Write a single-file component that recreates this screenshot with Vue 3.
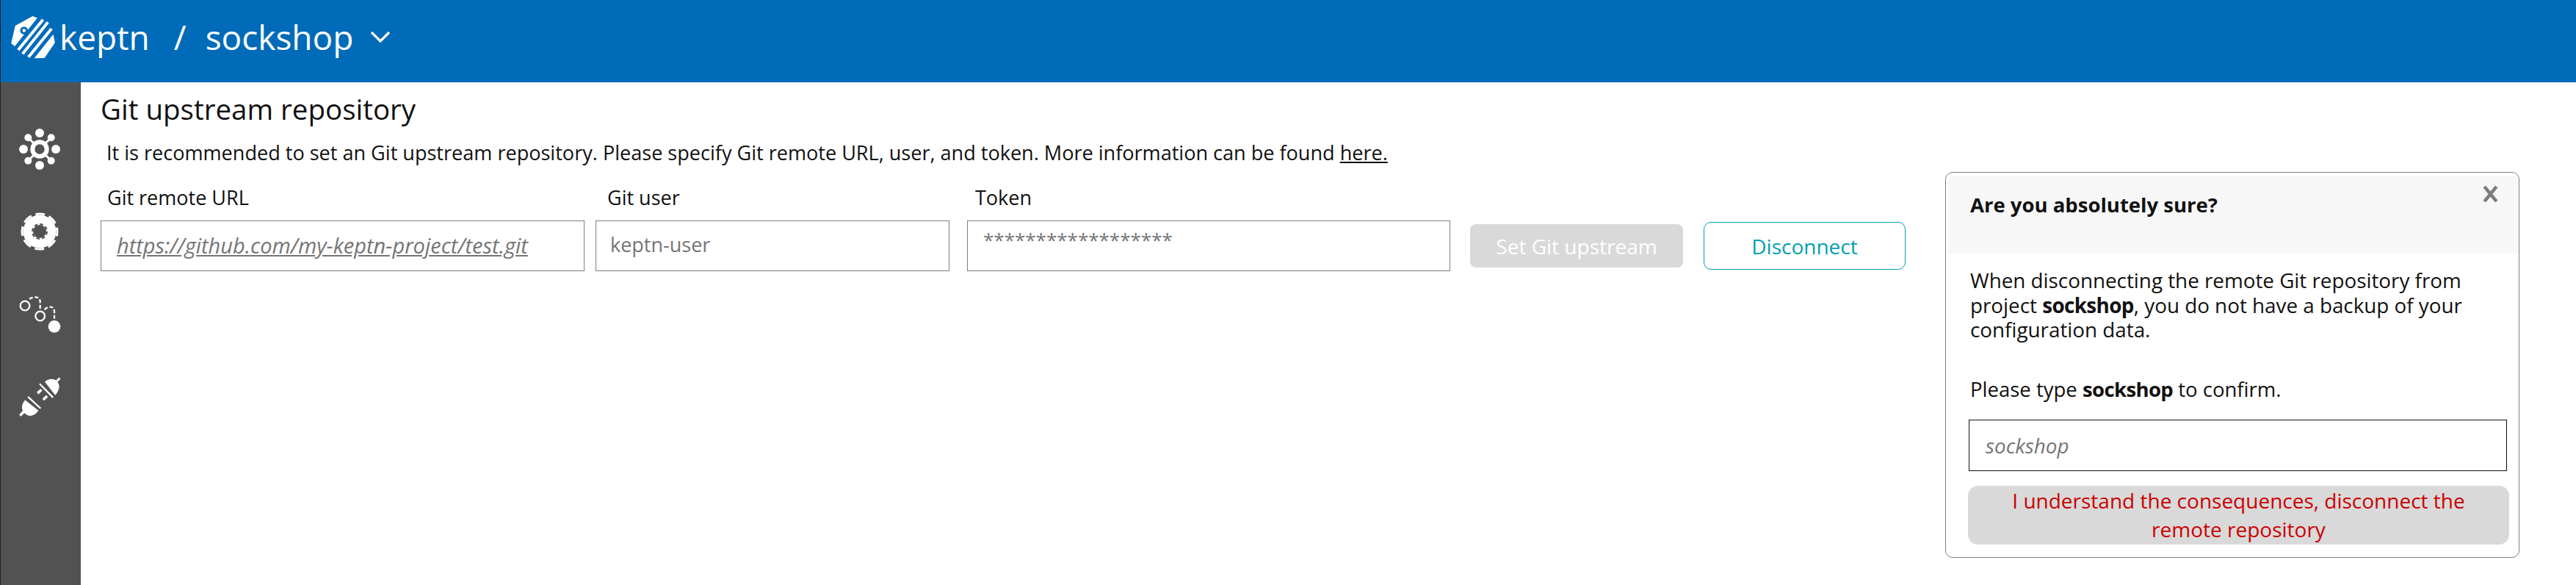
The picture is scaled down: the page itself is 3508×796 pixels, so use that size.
<script setup>
const fields = [
  { label: 'Git remote URL', value: 'https://github.com/my-keptn-project/test.git', cls: 'url' },
  { label: 'Git user', value: 'keptn-user', cls: 'user' },
  { label: 'Token', value: '******************', cls: 'token' }
]
</script>

<template>
  <div class="page">
    <header class="top">
      <svg class="logo" viewBox="45 30 180 178" width="60" height="59">
        <path fill="#fff" d="M62 72 L133 33 L153 40 L60 157 L45 145 Z" />
        <circle cx="98" cy="92" r="16" fill="#006bb8" />
        <circle cx="98" cy="92" r="7" fill="#fff" />
        <path stroke="#fff" stroke-width="12" fill="none" d="M176 47 L74 172 M196 58 L92 188 M211 84 L116 201" />
        <path fill="#fff" d="M218 108 L225 142 L182 205 L140 206 Z" />
      </svg>
      <span class="brand">keptn</span>
      <span class="slash">/</span>
      <span class="project">sockshop</span>
      <svg class="chev" viewBox="0 0 28 16" width="28" height="16"><path d="M2 2 L14 14 L26 2" fill="none" stroke="#fff" stroke-width="3.2" /></svg>
    </header>
    <div class="body">
      <nav class="side">
        <svg class="ico" viewBox="0 0 60 60" width="60" height="60">
          <g fill="#fff">
            <circle cx="30" cy="8" r="6" /><circle cx="30" cy="52" r="6" /><circle cx="8" cy="30" r="6" /><circle cx="52" cy="30" r="6" />
            <circle cx="14.3" cy="14.3" r="5" /><circle cx="45.7" cy="14.3" r="5" /><circle cx="14.3" cy="45.7" r="5" /><circle cx="45.7" cy="45.7" r="5" />
          </g>
          <path stroke="#fff" stroke-width="3" fill="none" d="M14 14 L46 46 M46 14 L14 46" />
          <circle cx="30" cy="30" r="9.7" fill="#525252" stroke="#fff" stroke-width="6" />
        </svg>
        <svg class="ico gear" viewBox="0 0 60 60" width="60" height="60">
          <circle cx="30" cy="30" r="22.5" fill="#fff" />
          <circle cx="30" cy="30" r="24" fill="none" stroke="#fff" stroke-width="3" stroke-dasharray="13 5.85" stroke-dashoffset="6.5" />
          <circle cx="30" cy="30" r="9" fill="#525252" />
          <circle cx="30" cy="30" r="10" fill="none" stroke="#525252" stroke-width="2" stroke-dasharray="4.5 3.35" />
        </svg>
        <svg class="ico" viewBox="40 30 180 165" width="60" height="55">
          <circle cx="70" cy="78" r="19" fill="none" stroke="#fff" stroke-width="7" />
          <circle cx="132" cy="120" r="19" fill="none" stroke="#fff" stroke-width="7" />
          <circle cx="190" cy="163" r="25" fill="#fff" />
          <path d="M88 50 C105 40 132 38 132 62 L132 92" fill="none" stroke="#fff" stroke-width="7" stroke-dasharray="15 8" />
          <path d="M150 94 C165 78 190 78 190 102 L190 134" fill="none" stroke="#fff" stroke-width="7" stroke-dasharray="15 8" />
        </svg>
        <svg class="ico" viewBox="40 360 180 175" width="60" height="58">
          <g fill="#fff">
            <path d="M151 389 C165 376 190 372 202 388 C218 405 208 428 194 444 Z" />
            <path d="M196 384 L210 370 L216 377 L202 391 Z" />
            <path d="M118 431 L134 417 L141 425 L125 441 Z" />
            <path d="M141 458 L157 443 L164 451 L148 466 Z" />
            <path d="M70 463 L125 506 C115 524 90 535 75 523 C58 512 48 490 70 463 Z" />
            <path d="M46 523 L60 508 L68 516 L53 531 Z" />
          </g>
          <path stroke="#fff" stroke-width="7" fill="none" d="M130 397 L185 453 M82 450 L134 498" />
        </svg>
      </nav>
      <main class="main">
        <h1 class="title">Git upstream repository</h1>
        <p class="intro">It is recommended to set an Git upstream repository. Please specify Git remote URL, user, and token. More information can be found <a>here.</a></p>
        <div class="form">
          <div v-for="f in fields" :key="f.label" class="field" :class="f.cls">
            <label>{{ f.label }}</label>
            <div class="input">{{ f.value }}</div>
          </div>
          <button class="set">Set Git upstream</button>
          <button class="disc">Disconnect</button>
        </div>
      </main>
      <aside class="dialog">
        <div class="dhead">
          <b>Are you absolutely sure?</b>
          <svg class="close" viewBox="0 0 24 24" width="23" height="22"><path d="M3 1 L21 23 M21 1 L3 23" stroke="#7d7d7d" stroke-width="5" fill="none" /></svg>
        </div>
        <div class="dbody">
          <p>When disconnecting the remote Git repository from project <b>sockshop</b>, you do not have a backup of your configuration data.</p>
          <p class="type">Please type <b>sockshop</b> to confirm.</p>
          <div class="confirm">sockshop</div>
          <button class="danger">I understand the consequences, disconnect the remote repository</button>
        </div>
      </aside>
    </div>
  </div>
</template>

<style>
html, body { margin: 0; background: #fff; }
</style>

<style scoped>
.page { width: 3508px; height: 796px; display: flex; flex-direction: column; font-family: "Open Sans", "Noto Sans", sans-serif; color: #111; overflow: hidden; border-left: 1px solid #222; box-sizing: border-box; }
.top { height: 112px; flex: none; background: #006bb8; color: #fff; display: flex; align-items: center; padding: 0 0 12px 14px; box-sizing: border-box; font-size: 46px; }
.logo { margin-right: 6px; }
.slash { margin-left: 33px; }
.project { margin-left: 26px; }
.chev { margin-left: 23px; }
.body { flex: 1; display: flex; min-height: 0; }
.side { width: 109px; flex: none; background: #525252; display: flex; flex-direction: column; align-items: center; padding-top: 61px; gap: 55px; box-sizing: border-box; }
.ico { display: block; margin-right: 4px; }
.gear { margin-top: -3px; }
.main { width: 2540px; flex: none; padding-left: 27px; box-sizing: border-box; }
.title { margin: 11px 0 0; font-size: 38.5px; font-weight: 400; line-height: 50px; }
.intro { margin: 17px 0 0 8px; font-size: 27.07px; line-height: 36px; }
.intro a { text-decoration: underline; }
.form { display: flex; align-items: flex-end; margin-top: 25px; }
.field { display: flex; flex-direction: column; }
.field label { font-size: 27px; line-height: 36px; margin: 0 0 13px 9px; }
.user label { margin-left: 16px; }
.token label { margin-left: 11px; }
.input { height: 69px; box-sizing: border-box; border: 1px solid #7f7f7f; padding: 13px 21px; font-size: 27px; color: #757575; }
.url { width: 659px; }
.url .input { font-size: 29px; font-style: italic; text-decoration: underline; }
.user { width: 482px; margin-left: 15px; }
.user .input { padding-left: 19px; }
.token { width: 658px; margin-left: 24px; }
.token .input { padding-top: 7px; font-size: 26px; }
.set { width: 290px; height: 59px; margin: 0 0 5px 27px; border: 0; border-radius: 8px; background: #d9d9d9; color: #fff; font: 28px "Open Sans", sans-serif; }
.disc { width: 275px; height: 65px; margin: 0 0 2px 28px; border: 1px solid #00a1b2; border-radius: 10px; background: #fff; color: #00a1b2; font: 28px "Open Sans", sans-serif; }
.dialog { position: absolute; left: 2649px; top: 234px; width: 782px; height: 525px; box-sizing: border-box; border: 1px solid #808080; border-radius: 10px; overflow: hidden; }
.dhead { height: 106px; margin: 4px 0 0 3px; background: #f7f7f7; padding: 22px 30px; box-sizing: border-box; font-size: 27.5px; line-height: 36px; position: relative; border-radius: 8px 8px 0 0; }
.close { position: absolute; right: 27px; top: 14px; }
.dbody { padding: 20px 0 0 33px; font-size: 27.8px; line-height: 33.5px; }
.dbody p { margin: 0; width: 720px; }
.dbody p b { letter-spacing: -0.6px; }
.dbody .type { margin-top: 47px; font-size: 27.5px; }
.confirm { width: 733px; height: 70px; margin: 25px 0 0 -2px; box-sizing: border-box; border: 1px solid #111; padding: 18px 22px; font-style: italic; color: #757575; }
.danger { display: block; width: 737px; height: 80px; margin: 20px 0 0 -3px; border: 0; border-radius: 14px; background: #d9d9d9; color: #c00; font: 28px/39px "Open Sans", sans-serif; padding: 0 40px; }
</style>
